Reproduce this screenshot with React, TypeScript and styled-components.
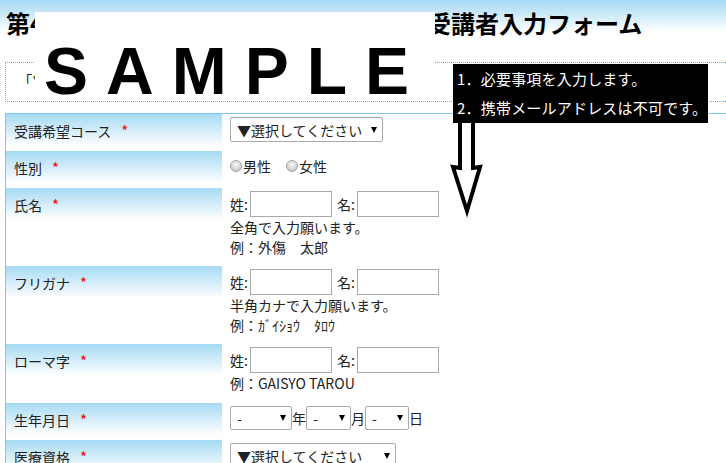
import React from "react";
import styled, { createGlobalStyle } from "styled-components";

const GlobalStyle = createGlobalStyle`
  html, body { margin: 0; padding: 0; overflow: hidden; background: #fff; }
  body {
    font-family: "Noto Sans CJK JP", "Noto Sans", sans-serif;
    font-size: 14px;
    color: #222;
  }
`;

const Page = styled.div`
  position: relative;
  width: 920px;
  min-height: 463px;
`;

const Header = styled.header`
  box-sizing: border-box;
  height: 40px;
  padding: 6px 0 0 6px;
  background: linear-gradient(to bottom, #a3d8f4 0, #ffffff 32px);
`;

const Title = styled.h1`
  margin: 0;
  font-size: 24px;
  line-height: 34px;
  font-weight: bold;
  color: #000;
  white-space: nowrap;
`;

const Main = styled.main`
  padding-left: 5px;
`;

const Notice = styled.div`
  box-sizing: border-box;
  height: 40px;
  margin-top: 22px;
  padding: 7px 0 0 12px;
  border: 1px dotted #5ab5e6;
  border-right: none;
  line-height: 20px;
  white-space: nowrap;
`;

const FormTable = styled.div`
  margin-top: 11px;
  border-top: 1px solid #7fc6ec;
  border-left: 1px solid #7fc6ec;
`;

const Row = styled.div<{ $min?: number }>`
  display: grid;
  grid-template-columns: 216px 1fr;
  min-height: ${(p) => p.$min ?? 37}px;
`;

const LabelCell = styled.div`
  padding: 7px 0 0 8px;
  line-height: 20px;
  color: #222;
  background: linear-gradient(to bottom, #a6daf4 0, #ffffff 32px);
`;

const Required = styled.span`
  margin-left: 10px;
  color: #f00;
  font-size: 15px;
`;

const ValueCell = styled.div`
  padding: 3px 0 9px 8px;
  line-height: 20px;
`;

const Line = styled.div<{ $h: number }>`
  display: flex;
  align-items: center;
  height: ${(p) => p.$h}px;
  white-space: nowrap;
`;

const HelpText = styled.div`
  line-height: 20px;
  white-space: nowrap;
`;

const SelectBox = styled.div<{ $w: number; $h: number }>`
  box-sizing: border-box;
  display: inline-flex;
  align-items: center;
  justify-content: space-between;
  width: ${(p) => p.$w}px;
  height: ${(p) => p.$h}px;
  padding: 0 5px 0 6px;
  border: 1px solid #a9a9a9;
  border-radius: 2px;
  background: #fff;
  color: #222;
`;

const Caret = styled.span`
  width: 0;
  height: 0;
  border-left: 3.5px solid transparent;
  border-right: 3.5px solid transparent;
  border-top: 6px solid #000;
`;

const Radio = styled.input.attrs({ type: "radio" })`
  appearance: none;
  box-sizing: border-box;
  width: 12px;
  height: 12px;
  margin: 0 1px 0 0;
  border: 1px solid #a0a0a0;
  border-radius: 50%;
  background: radial-gradient(circle at 50% 35%, #f6f6f6 0, #d0d0d0 70%, #c4c4c4 100%);
`;

const RadioLabel = styled.label`
  display: inline-flex;
  align-items: center;
  margin-right: 15px;
`;

const FieldLabel = styled.span<{ $gap?: number }>`
  margin-left: ${(p) => p.$gap ?? 0}px;
  padding-right: 2px;
`;

const TextBox = styled.input`
  box-sizing: border-box;
  width: 82px;
  height: 26px;
  margin: 0;
  padding: 0 3px;
  border: 1px solid #a9a9a9;
  font: inherit;
  background: #fff;
`;

const Unit = styled.span``;

const SampleStamp = styled.div`
  position: absolute;
  left: 35px;
  top: 12px;
  box-sizing: border-box;
  width: 400px;
  height: 86px;
  padding: 26px 0 0 9px;
  background: #fff;
  color: #000;
  font-family: "Liberation Sans", Arial, sans-serif;
  font-weight: bold;
  font-size: 66px;
  line-height: 66px;
  letter-spacing: 18px;
  white-space: nowrap;
  overflow: hidden;
`;

const Callout = styled.div`
  position: absolute;
  left: 453px;
  top: 64px;
  box-sizing: border-box;
  width: 255px;
  height: 59px;
  padding-left: 4px;
  background: #000;
  color: #fff;
  font-size: 15px;
  line-height: 29px;
  letter-spacing: 0.2px;
  white-space: nowrap;
`;

const ArrowSvg = styled.svg`
  position: absolute;
  left: 446px;
  top: 118px;
`;

function Select({ w, h = 25, text }: { w: number; h?: number; text: string }) {
  return (
    <SelectBox $w={w} $h={h}>
      <span>{text}</span>
      <Caret />
    </SelectBox>
  );
}

function NameInputs() {
  return (
    <Line $h={26}>
      <FieldLabel>姓:</FieldLabel>
      <TextBox />
      <FieldLabel $gap={5}>名:</FieldLabel>
      <TextBox />
    </Line>
  );
}

function Label({ text }: { text: string }) {
  return (
    <LabelCell>
      {text}
      <Required>*</Required>
    </LabelCell>
  );
}

export default function App() {
  return (
    <Page>
      <GlobalStyle />
      <Header>
        <Title>第4回外傷初期診療ガイドラインコース受講者入力フォーム</Title>
      </Header>
      <Main>
        <Notice>「*」は必須項目です。必ずご入力ください。</Notice>
        <FormTable>
          <Row>
            <Label text="受講希望コース" />
            <ValueCell>
              <Select w={153} text="▼選択してください" />
            </ValueCell>
          </Row>
          <Row>
            <Label text="性別" />
            <ValueCell>
              <Line $h={24}>
                <RadioLabel>
                  <Radio name="sex" />
                  男性
                </RadioLabel>
                <RadioLabel>
                  <Radio name="sex" />
                  女性
                </RadioLabel>
              </Line>
            </ValueCell>
          </Row>
          <Row>
            <Label text="氏名" />
            <ValueCell>
              <NameInputs />
              <HelpText>全角で入力願います。</HelpText>
              <HelpText>例：外傷　太郎</HelpText>
            </ValueCell>
          </Row>
          <Row>
            <Label text="フリガナ" />
            <ValueCell>
              <NameInputs />
              <HelpText>半角カナで入力願います。</HelpText>
              <HelpText>例：ｶﾞｲｼｮｳ　ﾀﾛｳ</HelpText>
            </ValueCell>
          </Row>
          <Row $min={59}>
            <Label text="ローマ字" />
            <ValueCell>
              <NameInputs />
              <HelpText>例：GAISYO TAROU</HelpText>
            </ValueCell>
          </Row>
          <Row>
            <Label text="生年月日" />
            <ValueCell>
              <Line $h={24}>
                <Select w={62} h={24} text="-" />
                <Unit>年</Unit>
                <Select w={45} h={24} text="-" />
                <Unit>月</Unit>
                <Select w={44} h={24} text="-" />
                <Unit>日</Unit>
              </Line>
            </ValueCell>
          </Row>
          <Row>
            <Label text="医療資格" />
            <ValueCell>
              <Select w={166} text="▼選択してください" />
            </ValueCell>
          </Row>
        </FormTable>
      </Main>

      <SampleStamp>SAMPLE</SampleStamp>
      <ArrowSvg width="40" height="100" viewBox="0 0 40 100">
        <path
          d="M14 2 L14 50 L7 49 L21 93 L34 49 L27 50 L27 2"
          fill="#fff"
          stroke="#000"
          strokeWidth="4"
          strokeLinejoin="miter"
        />
      </ArrowSvg>
      <Callout>
        <div>1．必要事項を入力します。</div>
        <div>2．携帯メールアドレスは不可です。</div>
      </Callout>
    </Page>
  );
}
